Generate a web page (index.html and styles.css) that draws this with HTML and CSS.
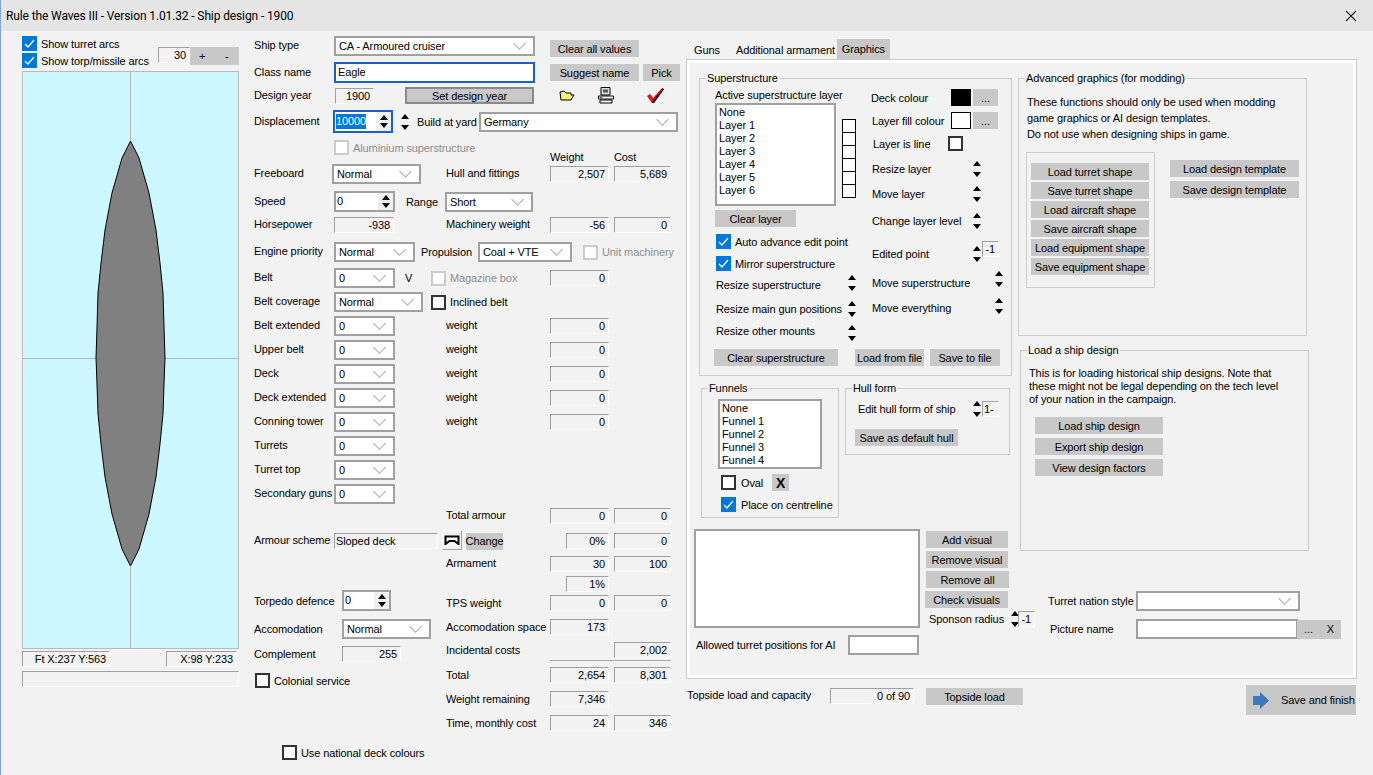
FILE: index.html

```html
<!DOCTYPE html>
<html lang="en">
<head>
  <meta charset="UTF-8">
  <title>Rule the Waves III - Ship design</title>
  <link rel="stylesheet" href="styles.css">
</head>
<body>
<div class="window">
  <div class="titlebar">
    <span>Rule the Waves III - Version 1.01.32 - Ship design - 1900</span>
    <svg class="close" width="12" height="12" viewBox="0 0 12 12"><path d="M1 1L11 11M11 1L1 11" stroke="#222" stroke-width="1.1" fill="none"/></svg>
  </div>

  <div class="main">
    <!-- hull preview -->
    <div class="preview">
      <div class="preview-top">
        <div class="preview-checks">
          <label class="chk"><span class="box on"><svg viewBox="0 0 15 15"><path d="M3 8L6 11L12 4" stroke="#fff" stroke-width="1.3" fill="none"/></svg></span>Show turret arcs</label>
          <label class="chk"><span class="box on"><svg viewBox="0 0 15 15"><path d="M3 8L6 11L12 4" stroke="#fff" stroke-width="1.3" fill="none"/></svg></span>Show torp/missile arcs</label>
        </div>
        <div class="zoom-ctl">
          <span class="val w32">30</span>
          <span class="btn zoom-btn">+</span>
          <span class="btn zoom-btn">-</span>
        </div>
      </div>
      <div class="canvas">
        <svg width="215" height="576" viewBox="23 72 215 576">
          <path d="M130.5 72V648M23 358.5H238" stroke="#b9b9b9" fill="none"/>
          <path d="M130.5 141L122 158L112 193L105 230L101 263L98 293L96.5 343L96 358L96.5 370L98 414L101 444L105 477L112 514L122 549L130.5 566L139 549L149 514L156 477L160 444L163 414L164.5 370L165 358L164.5 343L163 293L160 263L156 230L149 193L139 158Z" fill="#808080" stroke="#000"/>
        </svg>
      </div>
      <div class="preview-status">
        <span class="val w88">Ft X:237 Y:563</span>
        <span class="val w71">X:98 Y:233</span>
      </div>
      <div class="val preview-bar"></div>
    </div>

    <!-- ship values -->
    <div class="form">
      <div class="row h21">
        <span class="lbl">Ship type</span>
        <div class="ctrl">
          <div class="combo w201"><span>CA - Armoured cruiser</span></div>
          <span class="btn w89 h17 clear-btn">Clear all values</span>
        </div>
      </div>
      <div class="row h21 mt6">
        <span class="lbl">Class name</span>
        <div class="ctrl">
          <div class="input focus w201">Eagle</div>
          <span class="btn w89 h17 ml15">Suggest name</span>
          <span class="btn w37 h17 ml4">Pick</span>
        </div>
      </div>
      <div class="row h17 mt4">
        <span class="lbl">Design year</span>
        <div class="ctrl">
          <span class="val w39 ml1">1900</span>
          <span class="btn default-btn ml31">Set design year</span>
          <svg class="ml25" width="16" height="11" viewBox="0 0 16 11"><path d="M1 2L5 1L7 3H12V5H15L12 10H2Z" fill="#f4f07a" stroke="#000"/></svg>
          <svg class="ml23" width="16" height="17" viewBox="0 0 16 17"><path d="M3 .5H12V8H3Z" fill="#ddd" stroke="#000"/><rect x="5" y="2.5" width="5" height="3" fill="#0a8a5a"/><rect x="7" y="3" width="2" height="2" fill="#d22"/><path d="M.5 9H15.5V12H.5Z" fill="#fff" stroke="#000"/><rect x="2" y="10" width="2" height="1" fill="#d00"/><path d="M2 13H14V16H2Z" fill="#fff" stroke="#000"/></svg>
          <svg class="ml33" width="17" height="15" viewBox="0 0 17 15"><path d="M0 8L3 6L6 10L15 0L17 1L7 15H5Z" fill="#e8121c"/><path d="M5 15H7L17 1L16 .5L6.500 12Z" fill="#200"/></svg>
        </div>
      </div>
      <div class="row h23 mt6">
        <span class="lbl">Displacement</span>
        <div class="ctrl">
          <div class="spin focus w60 nudge"><span class="spin-text"><span class="sel">10000</span></span><span class="spin-btns"><span class="arrows small"></span></span></div>
          <span class="arrows ml8"></span>
          <span class="ml8 w62">Build at yard</span>
          <div class="combo w199"><span>Germany</span></div>
        </div>
      </div>
      <div class="row h24 mt7 row-top">
        <span class="lbl"></span>
        <label class="chk off"><span class="box dis"></span>Aluminium superstructure</label>
        <span class="col-w head">Weight</span>
        <span class="col-c head">Cost</span>
      </div>
      <div class="row h20">
        <span class="lbl">Freeboard</span>
        <div class="combo w89 nudge2"><span>Normal</span></div>
        <span class="col-sec">Hull and fittings</span>
        <span class="val col-w">2,507</span>
        <span class="val col-c">5,689</span>
      </div>
      <div class="row h21 mt7">
        <span class="lbl">Speed</span>
        <div class="ctrl">
          <div class="spin w61"><span class="spin-text">0</span><span class="spin-btns"><span class="arrows small"></span></span></div>
          <span class="ml11 w39">Range</span>
          <div class="combo w88"><span>Short</span></div>
        </div>
      </div>
      <div class="row h16 mt5">
        <span class="lbl">Horsepower</span>
        <span class="val w60">-938</span>
        <span class="col-sec">Machinery weight</span>
        <span class="val col-w">-56</span>
        <span class="val col-c">0</span>
      </div>
      <div class="row h20 mt9">
        <span class="lbl">Engine priority</span>
        <div class="ctrl">
          <div class="combo w81"><span>Normal</span></div>
          <span class="ml6 w57">Propulsion</span>
          <div class="combo w94"><span>Coal + VTE</span></div>
          <label class="chk off ml11"><span class="box dis"></span>Unit machinery</label>
        </div>
      </div>
      <div class="row h20 mt6">
        <span class="lbl">Belt</span>
        <div class="ctrl-left">
          <div class="combo w61"><span>0</span></div>
          <span class="ml10 w26">V</span>
          <label class="chk off"><span class="box dis"></span>Magazine box</label>
        </div>
        <span class="val col-w">0</span>
      </div>
      <div class="row h20 mt4">
        <span class="lbl">Belt coverage</span>
        <div class="ctrl-left">
          <div class="combo w89"><span>Normal</span></div>
          <label class="chk ml8"><span class="box"></span>Inclined belt</label>
        </div>
      </div>
      <div class="row h20 mt4">
        <span class="lbl">Belt extended</span>
        <div class="combo w61"><span>0</span></div>
        <span class="col-sec">weight</span>
        <span class="val col-w">0</span>
      </div>
      <div class="row h20 mt4">
        <span class="lbl">Upper belt</span>
        <div class="combo w61"><span>0</span></div>
        <span class="col-sec">weight</span>
        <span class="val col-w">0</span>
      </div>
      <div class="row h20 mt4">
        <span class="lbl">Deck</span>
        <div class="combo w61"><span>0</span></div>
        <span class="col-sec">weight</span>
        <span class="val col-w">0</span>
      </div>
      <div class="row h20 mt4">
        <span class="lbl">Deck extended</span>
        <div class="combo w61"><span>0</span></div>
        <span class="col-sec">weight</span>
        <span class="val col-w">0</span>
      </div>
      <div class="row h20 mt4">
        <span class="lbl">Conning tower</span>
        <div class="combo w61"><span>0</span></div>
        <span class="col-sec">weight</span>
        <span class="val col-w">0</span>
      </div>
      <div class="row h20 mt4">
        <span class="lbl">Turrets</span>
        <div class="combo w61"><span>0</span></div>
      </div>
      <div class="row h20 mt4">
        <span class="lbl">Turret top</span>
        <div class="combo w61"><span>0</span></div>
      </div>
      <div class="row h20 mt4">
        <span class="lbl">Secondary guns</span>
        <div class="combo w61"><span>0</span></div>
      </div>
      <div class="row h16 mt4">
        <span class="col-sec">Total armour</span>
        <span class="val col-w">0</span>
        <span class="val col-c">0</span>
      </div>
      <div class="row h17 mt8">
        <span class="lbl">Armour scheme</span>
        <div class="ctrl-left">
          <span class="val w104 left">Sloped deck</span>
          <span class="icon-btn"><svg width="16" height="10" viewBox="0 0 16 10"><path d="M1.500 9V1.500H14.500V9L10.500 6H5.500Z" fill="#fff" stroke="#000" stroke-width="2"/></svg></span>
          <span class="btn w37 h17 ml4">Change</span>
        </div>
        <span class="val col-w pct">0%</span>
        <span class="val col-c">0</span>
      </div>
      <div class="row h16 mt7">
        <span class="col-sec">Armament</span>
        <span class="val col-w">30</span>
        <span class="val col-c">100</span>
      </div>
      <div class="row h15 mt4">
        <span class="val col-w pct h16">1%</span>
      </div>

      <div class="form-bottom">
        <div class="bottom-left">
          <div class="sub-row h21">
            <span class="w88">Torpedo defence</span>
            <div class="spin w49"><span class="spin-text">0</span><span class="spin-btns"><span class="arrows small"></span></span></div>
          </div>
          <div class="sub-row h20 mt8">
            <span class="w88">Accomodation</span>
            <div class="combo w89"><span>Normal</span></div>
          </div>
          <div class="sub-row h17 mt6">
            <span class="w88">Complement</span>
            <span class="val w59">255</span>
          </div>
          <label class="chk ml1 mt11"><span class="box"></span>Colonial service</label>
          <label class="chk ml28 mt57"><span class="box"></span>Use national deck colours</label>
        </div>
        <div class="bottom-right">
          <div class="row sub h16 mt5"><span>TPS weight</span><span class="val col-w">0</span><span class="val col-c">0</span></div>
          <div class="row sub h16 mt8"><span>Accomodation space</span><span class="val col-w">173</span></div>
          <div class="row sub h16 mt7"><span>Incidental costs</span><span class="val col-c">2,002</span></div>
          <div class="sum-line"></div>
          <div class="row sub h16 mt6"><span>Total</span><span class="val col-w">2,654</span><span class="val col-c">8,301</span></div>
          <div class="row sub h16 mt8"><span>Weight remaining</span><span class="val col-w">7,346</span></div>
          <div class="row sub h16 mt8"><span>Time, monthly cost</span><span class="val col-w">24</span><span class="val col-c">346</span></div>
        </div>
      </div>
    </div>

    <!-- tabs -->
    <div class="panel">
      <div class="tabs">
        <span class="tab">Guns</span>
        <span class="tab">Additional armament</span>
        <span class="tab active">Graphics</span>
      </div>
      <div class="page">
        <div class="page-left">
          <fieldset class="group sup">
            <legend>Superstructure</legend>
            <div class="sup-cols">
              <div class="sup-left">
                <div class="list-title">Active superstructure layer</div>
                <div class="layers">
                  <div class="list layer-list">None<br>Layer 1<br>Layer 2<br>Layer 3<br>Layer 4<br>Layer 5<br>Layer 6</div>
                  <div class="layer-boxes"><i></i><i></i><i></i><i></i><i></i><i></i></div>
                </div>
                <span class="btn w81 h17 mt4">Clear layer</span>
                <label class="chk ml1 mt7"><span class="box on"><svg viewBox="0 0 15 15"><path d="M3 8L6 11L12 4" stroke="#fff" stroke-width="1.300" fill="none"/></svg></span>Auto advance edit point</label>
                <label class="chk ml1 mt7"><span class="box on"><svg viewBox="0 0 15 15"><path d="M3 8L6 11L12 4" stroke="#fff" stroke-width="1.300" fill="none"/></svg></span>Mirror superstructure</label>
                <div class="adj ml1 mt4"><span class="w132 dn2">Resize superstructure</span><span class="arrows"></span></div>
                <div class="adj ml1 mt10"><span class="w132">Resize main gun positions</span><span class="arrows"></span></div>
                <div class="adj ml1 mt8"><span class="w132 up2">Resize other mounts</span><span class="arrows"></span></div>
              </div>
              <div class="sup-right">
                <div class="swatch-row"><span class="w80">Deck colour</span><i class="swatch black"></i><span class="btn w25 h17 ml2">...</span></div>
                <div class="swatch-row mt6"><span class="w80 ml1b">Layer fill colour</span><i class="swatch"></i><span class="btn w25 h17 ml2">...</span></div>
                <label class="chk mt7 reverse"><span class="w73 ml2b">Layer is line</span><span class="box"></span></label>
                <div class="adj mt10"><span class="w102 ml1b">Resize layer</span><span class="arrows"></span></div>
                <div class="adj mt9"><span class="w102 ml1b">Move layer</span><span class="arrows"></span></div>
                <div class="adj mt11"><span class="w102 ml1b">Change layer level</span><span class="arrows"></span></div>
                <div class="adj mt17"><span class="w102 ml1b">Edited point</span><span class="arrows"></span><span class="val mini raised ml1">-1</span></div>
                <div class="adj mt9"><span class="w124 ml1b dn4">Move superstructure</span><span class="arrows"></span></div>
                <div class="adj mt11"><span class="w124 ml1b dn2">Move everything</span><span class="arrows"></span></div>
              </div>
            </div>
            <div class="sup-actions">
              <span class="btn w124 h17">Clear superstructure</span>
              <span class="btn w69 h17 ml17">Load from file</span>
              <span class="btn w70 h17 ml6">Save to file</span>
            </div>
          </fieldset>

          <div class="mid-groups">
            <fieldset class="group funnels">
              <legend>Funnels</legend>
              <div class="list funnel-list">None<br>Funnel 1<br>Funnel 2<br>Funnel 3<br>Funnel 4</div>
              <div class="oval-row">
                <label class="chk wide"><span class="box"></span>Oval</label>
                <span class="btn x-btn">X</span>
              </div>
              <label class="chk wide ml19 mt6"><span class="box on"><svg viewBox="0 0 15 15"><path d="M3 8L6 11L12 4" stroke="#fff" stroke-width="1.300" fill="none"/></svg></span>Place on centreline</label>
            </fieldset>
            <fieldset class="group hull">
              <legend>Hull form</legend>
              <div class="adj ml12 mt6"><span class="w115">Edit hull form of ship</span><span class="arrows"></span><span class="val mini left ml1">1-</span></div>
              <span class="btn w103 h17 ml9 mt12">Save as default hull</span>
            </fieldset>
          </div>

          <div class="visuals">
            <div class="list visual-list"></div>
            <div class="visual-btns">
              <span class="btn w82 h17 mt2">Add visual</span>
              <span class="btn w82 h17 mt3">Remove visual</span>
              <span class="btn w83 h17 mt3">Remove all</span>
              <span class="btn w83 h17 mt3 shift-left">Check visuals</span>
              <div class="adj ml3 mt3"><span class="w82">Sponson radius</span><span class="arrows"></span><span class="val mini ml-1">-1</span></div>
            </div>
          </div>
          <div class="allowed">
            <span class="w152">Allowed turret positions for AI</span>
            <div class="input plain w71"></div>
          </div>
        </div>

        <div class="page-right">
          <fieldset class="group advanced">
            <legend>Advanced graphics (for modding)</legend>
            <p class="note">These functions should only be used when modding<br>game graphics or AI design templates.<br>Do not use when designing ships in game.</p>
            <div class="adv-cols">
              <div class="shape-box">
                <span class="btn w118 h17">Load turret shape</span>
                <span class="btn w118 h17">Save turret shape</span>
                <span class="btn w118 h17">Load aircraft shape</span>
                <span class="btn w118 h17">Save aircraft shape</span>
                <span class="btn w118 h17">Load equipment shape</span>
                <span class="btn w118 h17">Save equipment shape</span>
              </div>
              <div class="template-btns">
                <span class="btn w129 h17">Load design template</span>
                <span class="btn w129 h17">Save design template</span>
              </div>
            </div>
          </fieldset>
          <fieldset class="group load">
            <legend>Load a ship design</legend>
            <p class="note tight">This is for loading historical ship designs. Note that<br>these might not be legal depending on the tech level<br>of your nation in the campaign.</p>
            <div class="load-btns">
              <span class="btn w128 h17">Load ship design</span>
              <span class="btn w128 h17">Export ship design</span>
              <span class="btn w128 h17">View design factors</span>
            </div>
          </fieldset>
          <div class="pic-row turret-style">
            <span class="w88">Turret nation style</span>
            <div class="combo w164"><span></span></div>
          </div>
          <div class="pic-row picture">
            <span class="w86">Picture name</span>
            <div class="input plain w162"></div>
            <span class="btn pic-btn"><span>...</span><span>X</span></span>
          </div>
        </div>
      </div>
      <div class="footer-row">
        <span class="w143 ml1 mt3">Topside load and capacity</span>
        <span class="val w84 mt3">0 of 90</span>
        <span class="btn w97 h17 ml12 mt3">Topside load</span>
        <span class="btn save-btn">
          <svg width="17" height="17" viewBox="0 0 17 17"><path d="M0 4H7V0L16 8.500L7 17V13H0Z" fill="#3b78bc"/></svg>
          Save and finish
        </span>
      </div>
    </div>
  </div>
</div>
</body>
</html>
```

FILE: styles.css

```css
* {
  box-sizing: border-box;
}

body {
  margin: 0;
  font-family: "Liberation Sans", Arial, sans-serif;
  font-size: 11px;
  line-height: 14px;
  letter-spacing: -0.1px;
  white-space: nowrap;
  color: #000;
  background: #f2f2f2;
}

.window {
  width: 1373px;
  height: 775px;
  overflow: hidden;
  border-left: 1px solid #83a6d9;
  background: #f2f2f2;
}

.titlebar {
  height: 31px;
  padding: 0 16px 0 5px;
  display: flex;
  align-items: center;
  justify-content: space-between;
  font-family: Roboto, "Liberation Sans", Arial, sans-serif;
  font-size: 12px;
  letter-spacing: -0.12px;
  background: #e5e5e5;
}

.main {
  display: flex;
  height: 744px;
}

/* preview column */
.preview {
  width: 217px;
  margin-left: 21px;
  padding-top: 5px;
  flex: none;
}

.preview-top {
  display: flex;
  justify-content: space-between;
  height: 35px;
}

.preview-checks {
  display: flex;
  flex-direction: column;
  gap: 2px;
}

.zoom-ctl {
  display: flex;
  flex: none;
  margin-top: 11px;
  height: 18px;
}

.zoom-btn {
  width: 24.5px;
  height: 18px;
}

.canvas {
  width: 217px;
  height: 578px;
  border: 1px solid #b9b9b9;
  background: #ccf7ff;
}

.canvas svg {
  display: block;
}

.preview-status {
  display: flex;
  justify-content: space-between;
  margin-top: 2px;
  padding-right: 2px;
}

.preview-bar {
  display: block;
  width: 217px;
  height: 16px;
  margin-top: 4px;
}

/* generic controls */
.val {
  display: inline-block;
  height: 16px;
  padding-right: 3px;
  line-height: 15px;
  text-align: right;
  border-top: 1px solid #a0a0a0;
  border-left: 1px solid #a0a0a0;
  border-right: 1px solid #fff;
  border-bottom: 1px solid #fff;
}

.val.left {
  text-align: left;
  padding-left: 1px;
}

.mini {
  width: 17px;
  height: 16px;
}

.raised {
  align-self: flex-start;
  margin-top: -5px;
}

.btn {
  display: inline-flex;
  align-items: center;
  justify-content: center;
  background: #c8c8c8;
}

.default-btn {
  width: 129px;
  height: 17px;
  border: 2px solid #8a8a8a;
}

.clear-btn {
  margin-left: 15px;
  align-self: flex-end;
  margin-bottom: -1px;
}

.icon-btn {
  display: inline-flex;
  align-items: center;
  justify-content: center;
  width: 20px;
  height: 20px;
  margin-left: 4px;
  margin-top: -2px;
  border-top: 1px solid #fff;
  border-left: 1px solid #fff;
  border-right: 1px solid #a0a0a0;
  border-bottom: 1px solid #a0a0a0;
}

.combo {
  display: flex;
  align-items: center;
  justify-content: space-between;
  flex: none;
  height: 20px;
  padding: 0 9px 0 3px;
  background: #fff;
  border: 2px solid #a0a0a0;
}

.combo::after {
  content: "";
  width: 8px;
  height: 8px;
  margin-top: -5px;
  border-right: 1px solid #a8a8a8;
  border-bottom: 1px solid #a8a8a8;
  transform: rotate(45deg);
}

.input {
  flex: none;
  height: 21px;
  padding-left: 2px;
  line-height: 17px;
  background: #fff;
  border: 2px solid #a0a0a0;
}

.input.focus {
  border-color: #1a5fd2;
}

.input.plain {
  height: 20px;
}

.spin {
  display: flex;
  flex: none;
  height: 21px;
  background: #fff;
  border: 2px solid #a0a0a0;
}

.spin.focus {
  height: 23px;
  border-color: #1a5fd2;
}

.spin-text {
  flex: 1;
  padding-left: 1px;
  line-height: 17px;
}

.spin.focus .spin-text {
  line-height: 19px;
}

.sel {
  background: #0078d7;
  color: #fff;
  display: inline-block;
  height: 15px;
  line-height: 15px;
}

.spin-btns {
  display: flex;
  align-items: center;
  justify-content: center;
  width: 15px;
  background: #f0f0f0;
}

.arrows {
  display: inline-flex;
  flex-direction: column;
  justify-content: space-between;
  flex: none;
  width: 8px;
  height: 16px;
}

.arrows::before,
.arrows::after {
  content: "";
  border-left: 4px solid transparent;
  border-right: 4px solid transparent;
}

.arrows::before {
  border-bottom: 5px solid #000;
}

.arrows::after {
  border-top: 5px solid #000;
}

.arrows.small {
  height: 13px;
}

.chk {
  display: flex;
  align-items: center;
  gap: 4px;
}

.chk.off {
  color: #8c8c8c;
}

.chk.wide {
  gap: 5px;
}

.box {
  flex: none;
  display: block;
  width: 15px;
  height: 15px;
  background: #fff;
  border: 2px solid #333;
}

.box.on {
  background: #0078d7;
  border: 0;
}

.box.dis {
  border-color: #ccc;
}

.box svg {
  display: block;
}

/* form column */
.form {
  width: 426px;
  margin-left: 15px;
  padding-top: 4px;
  flex: none;
}

.row {
  display: grid;
  grid-template-columns: 80px 112px 104px 59px 5px 57px;
  align-items: center;
}

.lbl {
  grid-column: 1;
  margin-bottom: 2px;
}

.col-sec {
  grid-column: 3;
  margin-bottom: 2px;
}

.col-w {
  grid-column: 4;
}

.col-c {
  grid-column: 6;
}

.pct {
  width: 43px;
  justify-self: end;
}

.head {
  align-self: end;
  border: 0;
}

.row-top {
  align-items: start;
}

.row-top .chk {
  grid-column: 2 / 4;
}

.ctrl {
  grid-column: 2 / 8;
  display: flex;
  align-items: center;
  height: 100%;
}

.ctrl-left {
  grid-column: 2 / 4;
  display: flex;
  align-items: center;
}

.nudge {
  margin-left: -1px;
}

.nudge2 {
  margin-left: -2px;
}

.form-bottom {
  display: flex;
  margin-top: -1px;
}

.bottom-left {
  width: 192px;
}

.sub-row {
  display: flex;
  align-items: center;
}

.row.sub {
  grid-template-columns: 104px 59px 5px 57px;
}

.row.sub .col-w {
  grid-column: 2;
}

.row.sub .col-c {
  grid-column: 4;
}

.sum-line {
  width: 121px;
  height: 1px;
  margin: 2px 0 0 104px;
  background: #a8a8a8;
}

/* right panel */
.panel {
  width: 671px;
  margin-left: 6px;
  padding-top: 8px;
  flex: none;
}

.tabs {
  display: flex;
  height: 20px;
  padding-left: 4px;
}

.tab {
  padding: 4px 4px 0;
  margin-right: 8px;
}

.tab:nth-child(2) {
  padding-right: 2px;
  margin-right: 0;
}

.tab.active {
  width: 53px;
  padding: 3px 0 0;
  margin: 0;
  text-align: center;
  background: #c8c8c8;
}

.page {
  display: flex;
  height: 620px;
  padding: 1px 0 0 7px;
  border: 1px solid #ccc;
  outline: 3px solid #fff;
  outline-offset: -4px;
  background: #f2f2f2;
}

.page-left {
  width: 340px;
  flex: none;
  padding-top: 3px;
}

.page-right {
  margin-left: -16px;
  padding-top: 3px;
}

.group {
  display: block;
  min-width: 0;
  margin: 0;
  padding: 0;
  border: 1px solid #ccc;
}

.group legend {
  margin-left: 6px;
  padding: 0 1px;
  line-height: 14px;
}

.group p {
  margin: 0;
}

.sup {
  width: 313px;
  height: 305px;
  margin: 7px 0 0 5px;
  padding-left: 15px;
}

.sup legend {
  margin-left: -9px;
}

.sup-cols {
  display: flex;
  height: 264px;
}

.sup-left {
  width: 156px;
  flex: none;
}

.sup-left > .btn {
  display: flex;
}

.list-title {
  margin-top: 3px;
  height: 15px;
}

.layers {
  display: flex;
  gap: 6px;
}

.list {
  flex: none;
  padding: 1px 2px;
  line-height: 13px;
  background: #fff;
  border: 2px solid #a0a0a0;
}

.layer-list {
  width: 121px;
  height: 103px;
}

.layer-boxes {
  margin-top: 16px;
}

.layer-boxes i {
  display: block;
  width: 14px;
  height: 14px;
  margin-bottom: -1px;
  background: #fff;
  border: 1px solid #000;
}

.adj {
  display: flex;
  align-items: center;
  height: 16px;
}

.dn2 {
  margin-top: 4px;
}

.dn4 {
  margin-top: 8px;
}

.up2 {
  margin-bottom: 4px;
}

.sup-right {
  flex: 1;
  padding-top: 4px;
}

.swatch-row {
  display: flex;
  align-items: center;
  height: 17px;
}

.swatch {
  display: block;
  width: 20px;
  height: 17px;
  background: #fff;
  border: 1px solid #000;
}

.swatch.black {
  background: #000;
}

.sup-actions {
  display: flex;
  margin-left: -1px;
}

.mid-groups {
  display: flex;
  margin-top: 5px;
}

.funnels {
  width: 138px;
  height: 137px;
  margin-left: 7px;
}

.funnel-list {
  width: 104px;
  height: 70px;
  margin: 4px 0 0 16px;
}

.oval-row {
  display: flex;
  align-items: center;
  margin: 5px 0 0 19px;
}

.x-btn {
  width: 17px;
  height: 17px;
  margin-left: 9px;
  font-size: 14px;
  font-weight: bold;
}

.hull {
  width: 165px;
  height: 74px;
  margin-left: 6px;
}

.hull .btn {
  display: flex;
}

.visuals {
  display: flex;
  margin-top: 11px;
}

.visual-list {
  width: 226px;
  height: 99px;
}

.visual-btns {
  margin-left: 6px;
  display: flex;
  flex-direction: column;
  align-items: flex-start;
}

.shift-left {
  margin-left: -1px;
}

.allowed {
  display: flex;
  align-items: center;
  height: 20px;
  margin: 7px 0 0 2px;
}

.advanced {
  width: 289px;
  height: 265px;
  margin-top: 7px;
}

.note {
  padding: 9px 0 0 8px;
  line-height: 16px;
}

.note.tight {
  padding-top: 10px;
  line-height: 13px;
}

.adv-cols {
  display: flex;
  margin: 10px 0 0 7px;
}

.shape-box {
  display: flex;
  flex-direction: column;
  gap: 2px;
  width: 129px;
  height: 136px;
  padding: 10px 0 0 4px;
  border: 1px solid #ccc;
}

.template-btns {
  display: flex;
  flex-direction: column;
  gap: 4px;
  margin: 8px 0 0 15px;
}

.load {
  width: 289px;
  height: 208px;
  margin: 7px 0 0 2px;
}

.load-btns {
  display: flex;
  flex-direction: column;
  gap: 4px;
  margin: 11px 0 0 14px;
}

.pic-row {
  display: flex;
  align-items: center;
  height: 20px;
}

.turret-style {
  margin: 40px 0 0 30px;
}

.picture {
  margin: 8px 0 0 32px;
}

.pic-btn {
  justify-content: space-around;
  width: 44px;
  height: 19px;
  margin-left: -1px;
}

.footer-row {
  display: flex;
  align-items: flex-start;
  height: 30px;
  margin-top: 6px;
}

.save-btn {
  justify-content: flex-start;
  gap: 11px;
  width: 110px;
  height: 30px;
  margin-left: auto;
  margin-right: 1px;
  padding-left: 7px;
}

.save-btn svg {
  flex: none;
}

/* sizes and small gaps */
.w25 { width: 25px; flex: none; }
.w26 { width: 26px; flex: none; }
.w32 { width: 32px; flex: none; }
.w37 { width: 37px; flex: none; }
.w39 { width: 39px; flex: none; }
.w49 { width: 49px; flex: none; }
.w57 { width: 57px; flex: none; }
.w59 { width: 59px; flex: none; }
.w60 { width: 60px; flex: none; }
.w61 { width: 61px; flex: none; }
.w62 { width: 62px; flex: none; }
.w69 { width: 69px; flex: none; }
.w70 { width: 70px; flex: none; }
.w71 { width: 71px; flex: none; }
.w73 { width: 73px; flex: none; }
.w80 { width: 80px; flex: none; }
.w81 { width: 81px; flex: none; }
.w82 { width: 82px; flex: none; }
.w83 { width: 83px; flex: none; }
.w84 { width: 84px; flex: none; }
.w86 { width: 86px; flex: none; }
.w88 { width: 88px; flex: none; }
.w89 { width: 89px; flex: none; }
.w94 { width: 94px; flex: none; }
.w97 { width: 97px; flex: none; }
.w102 { width: 102px; flex: none; }
.w103 { width: 103px; flex: none; }
.w104 { width: 104px; flex: none; }
.w115 { width: 115px; flex: none; }
.w118 { width: 118px; flex: none; }
.w124 { width: 124px; flex: none; }
.w128 { width: 128px; flex: none; }
.w129 { width: 129px; flex: none; }
.w132 { width: 132px; flex: none; }
.w143 { width: 143px; flex: none; }
.w152 { width: 152px; flex: none; }
.w162 { width: 162px; flex: none; }
.w164 { width: 164px; flex: none; }
.w199 { width: 199px; flex: none; }
.w201 { width: 201px; flex: none; }

.h15 { height: 15px; }
.h16 { height: 16px; }
.h17 { height: 17px; }
.h20 { height: 20px; }
.h21 { height: 21px; }
.h23 { height: 23px; }
.h24 { height: 24px; }

.mt2 { margin-top: 2px; }
.mt3 { margin-top: 3px; }
.mt4 { margin-top: 4px; }
.mt5 { margin-top: 5px; }
.mt6 { margin-top: 6px; }
.mt7 { margin-top: 7px; }
.mt8 { margin-top: 8px; }
.mt9 { margin-top: 9px; }
.mt10 { margin-top: 10px; }
.mt11 { margin-top: 11px; }
.mt12 { margin-top: 12px; }
.mt17 { margin-top: 17px; }
.mt57 { margin-top: 57px; }

.ml-1 { margin-left: -1px; }
.ml1 { margin-left: 1px; }
.ml1b { padding-left: 1px; }
.ml2b { padding-left: 2px; }
.ml2 { margin-left: 2px; }
.ml3 { margin-left: 3px; }
.ml4 { margin-left: 4px; }
.ml6 { margin-left: 6px; }
.ml8 { margin-left: 8px; }
.ml9 { margin-left: 9px; }
.ml10 { margin-left: 10px; }
.ml11 { margin-left: 11px; }
.ml12 { margin-left: 12px; }
.ml15 { margin-left: 15px; }
.ml17 { margin-left: 17px; }
.ml19 { margin-left: 19px; }
.ml23 { margin-left: 23px; }
.ml25 { margin-left: 25px; }
.ml28 { margin-left: 28px; }
.ml31 { margin-left: 31px; }
.ml33 { margin-left: 33px; }
```
